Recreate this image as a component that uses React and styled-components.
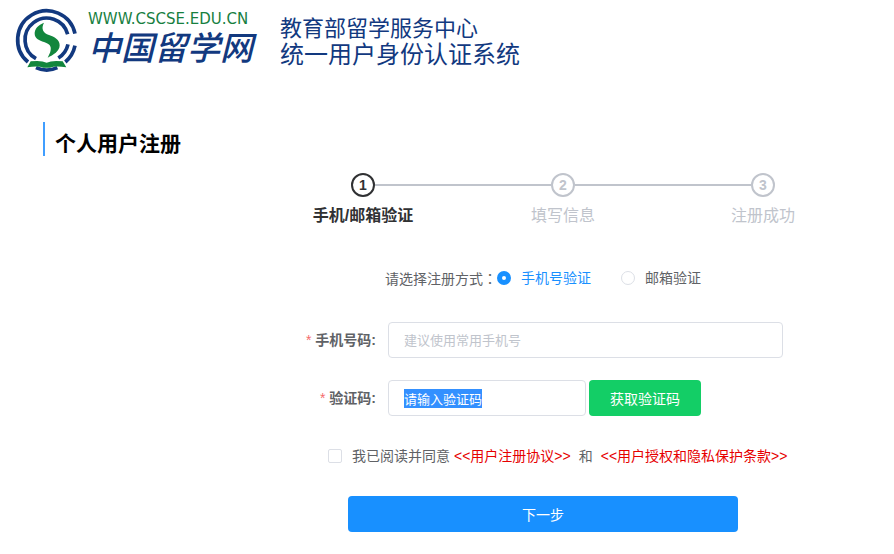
import React, { useEffect, useRef, useState } from "react";
import styled, { createGlobalStyle } from "styled-components";

const colorPalette = {
  brand: "#12397f",
  brandGreen: "#17803f",
  primary: "#1890ff",
  success: "#13ce66",
  text: "#606266",
  dark: "#303133",
  muted: "#c0c4cc",
  border: "#dcdfe6",
  danger: "#f56c6c",
  link: "#e60000",
};

const GlobalStyle = createGlobalStyle`
  * {
    box-sizing: border-box;
  }

  body {
    margin: 0;
    background-color: white;
    color: ${colorPalette.text};
    font-family: "Liberation Sans", "Noto Sans CJK SC", sans-serif;
    font-size: 14px;
    line-height: 20px;
  }

  button,
  input {
    font-family: inherit;
  }
`;

const Header = styled.header`
  display: flex;
  align-items: flex-start;
  padding: 4px 14px 0;
`;

const LogoMark = styled.svg`
  width: 66px;
  height: 70px;
  flex-shrink: 0;
`;

const LogoWords = styled.div`
  display: flex;
  flex-direction: column;
  margin: 4px 0 0 8px;
  white-space: nowrap;
`;

const LogoUrl = styled.span`
  color: ${colorPalette.brandGreen};
  font-family: "DejaVu Sans", sans-serif;
  font-size: 15px;
  line-height: 22px;
`;

const LogoName = styled.span`
  color: ${colorPalette.brand};
  font-size: 33px;
  font-style: italic;
  font-weight: 500;
  line-height: 38px;
`;

const SystemName = styled.div`
  display: flex;
  flex-direction: column;
  margin: 12px 0 0 27px;
  color: ${colorPalette.brand};
  line-height: 26px;
  white-space: nowrap;
`;

const SystemLine = styled.span`
  font-size: ${(props) => props.$size};
`;

const PageTitle = styled.h1`
  margin: 48px 0 0 43px;
  padding-left: 10px;
  border-left: 2px solid #409eff;
  color: black;
  font-size: 21px;
  font-weight: 700;
  line-height: 34px;
  padding-top: 5px;
  height: 34px;
`;

const Main = styled.main`
  padding: 17px 31px 22px 263px;
`;

const StepList = styled.ol`
  display: grid;
  grid-template-columns: repeat(3, 1fr);
  list-style-type: none;
  margin: 0;
  padding: 0;
`;

const StepItem = styled.li`
  color: ${(props) => (props.$active ? colorPalette.dark : colorPalette.muted)};
  font-size: 16px;
  font-weight: ${(props) => (props.$active ? 700 : 400)};
  line-height: 38px;
  text-align: center;
`;

const StepHead = styled.div`
  display: flex;
  align-items: center;
`;

const StepLine = styled.span`
  flex: 1;
  height: 2px;
  background-color: ${(props) => (props.$hidden ? "transparent" : colorPalette.muted)};
`;

const StepCircle = styled.span`
  width: 24px;
  height: 24px;
  border: 2px solid currentColor;
  border-radius: 50%;
  font-size: 14px;
  font-weight: 700;
  line-height: 20px;
`;

const Form = styled.form`
  display: flex;
  flex-direction: column;
  gap: 22px;
  margin-top: 32px;
`;

const MethodGroup = styled.div`
  display: flex;
  align-items: center;
  height: 22px;
  margin: 0 0 11px 122px;
  white-space: nowrap;
`;

const Colon = styled.span`
  font-family: "Noto Sans CJK TC", sans-serif;
`;

const Choice = styled.label`
  display: flex;
  align-items: center;
  gap: 10px;
  margin-right: 30px;
  color: ${(props) => (props.$checked ? colorPalette.primary : colorPalette.text)};
  cursor: pointer;
`;

const Radio = styled.input`
  appearance: none;
  width: 14px;
  height: 14px;
  margin: 0;
  border: 1px solid ${colorPalette.border};
  border-radius: 50%;
  background-color: white;

  &:checked {
    border: 5px solid ${colorPalette.primary};
  }
`;

const Field = styled.div`
  display: grid;
  grid-template-columns: 125px 1fr;
  align-items: center;
  padding-right: 80px;
`;

const FieldLabel = styled.label`
  padding-right: 12px;
  font-weight: 700;
  text-align: right;

  &::before {
    content: "*";
    margin-right: 4px;
    color: ${colorPalette.danger};
    font-weight: 400;
  }
`;

const CodeControls = styled.div`
  display: flex;
  gap: 3px;
`;

const TextInput = styled.input`
  width: 100%;
  max-width: ${(props) => props.$maxWidth || "none"};
  height: 36px;
  padding: 0 15px;
  border: 1px solid ${colorPalette.border};
  border-radius: 4px;
  outline: none;
  color: ${colorPalette.text};
  font-size: 13px;

  &::placeholder {
    color: ${colorPalette.muted};
  }

  &::selection {
    background-color: #3390ff;
    color: white;
  }
`;

const Button = styled.button`
  height: 36px;
  padding: 0 21px;
  border: none;
  border-radius: 4px;
  background-color: ${(props) => props.$color};
  color: white;
  font-size: 14px;
  white-space: nowrap;
  cursor: pointer;
`;

const Agreement = styled.div`
  display: flex;
  align-items: center;
  height: 36px;
  margin-left: 65px;
  white-space: nowrap;
`;

const AgreeLabel = styled.label`
  display: flex;
  align-items: center;
  gap: 10px;
  margin-right: 4px;
`;

const Checkbox = styled.input`
  appearance: none;
  width: 14px;
  height: 14px;
  margin: 0;
  border: 1px solid ${colorPalette.border};
  border-radius: 2px;
  background-color: white;

  &:checked {
    background-color: ${colorPalette.primary};
  }
`;

const And = styled.span`
  margin: 0 8px;
`;

const TermsLink = styled.a`
  color: ${colorPalette.link};
  text-decoration: none;
`;

const Submit = styled.div`
  display: grid;
  padding: 0 125px 0 85px;
`;

const steps = ["手机/邮箱验证", "填写信息", "注册成功"];

const methods = [
  { value: "phone", label: "手机号验证" },
  { value: "email", label: "邮箱验证" },
];

const Logo = () => (
  <LogoMark viewBox="0 0 198 210" aria-hidden="true">
    <g fill="none" stroke={colorPalette.brand} strokeWidth="11">
      <path d="M183 89A87 87 0 1 0 42 174" />
      <path d="M183 125A87 87 0 0 1 154 174" />
      <path d="M66 191Q98 206 130 191" />
      <path d="M161 91A65 65 0 1 0 66 164" />
      <path d="M162 121A65 65 0 0 1 133 162" />
    </g>
    <path
      fill="#12863d"
      d="M90 56C73 63 61 74 62 90C63 104 76 110 90 114C106 119 112 126 110 138C109 147 104 154 101 161C118 153 137 142 137 124C137 106 121 99 105 93C88 87 80 74 90 56Z"
    />
    <path
      fill="#12863d"
      d="M50 172Q82 168 98 176Q114 168 146 172L157 190Q124 184 108 191L88 191Q72 184 40 190Z"
    />
  </LogoMark>
);

const App = () => {
  const [method, setMethod] = useState("phone");
  const [code, setCode] = useState("请输入验证码");
  const codeInput = useRef(null);

  useEffect(() => {
    codeInput.current.focus();
    codeInput.current.select();
  }, []);

  return (
    <>
      <GlobalStyle />
      <Header>
        <Logo />
        <LogoWords>
          <LogoUrl>WWW.CSCSE.EDU.CN</LogoUrl>
          <LogoName>中国留学网</LogoName>
        </LogoWords>
        <SystemName>
          <SystemLine $size="22px">教育部留学服务中心</SystemLine>
          <SystemLine $size="24px">统一用户身份认证系统</SystemLine>
        </SystemName>
      </Header>

      <PageTitle>个人用户注册</PageTitle>

      <Main>
        <StepList>
          {steps.map((title, index) => (
            <StepItem key={title} $active={index === 0}>
              <StepHead>
                <StepLine $hidden={index === 0} />
                <StepCircle>{index + 1}</StepCircle>
                <StepLine $hidden={index === steps.length - 1} />
              </StepHead>
              {title}
            </StepItem>
          ))}
        </StepList>

        <Form onSubmit={(e) => e.preventDefault()}>
          <MethodGroup role="radiogroup" aria-labelledby="method-label">
            <span id="method-label">
              请选择注册方式<Colon>：</Colon>
            </span>
            {methods.map((item) => (
              <Choice key={item.value} $checked={method === item.value}>
                <Radio
                  type="radio"
                  name="method"
                  value={item.value}
                  checked={method === item.value}
                  onChange={() => setMethod(item.value)}
                />
                {item.label}
              </Choice>
            ))}
          </MethodGroup>

          <Field>
            <FieldLabel htmlFor="phone">手机号码:</FieldLabel>
            <TextInput id="phone" type="text" placeholder="建议使用常用手机号" />
          </Field>

          <Field>
            <FieldLabel htmlFor="code">验证码:</FieldLabel>
            <CodeControls>
              <TextInput
                id="code"
                type="text"
                ref={codeInput}
                $maxWidth="198px"
                value={code}
                onChange={(e) => setCode(e.target.value)}
              />
              <Button type="button" $color={colorPalette.success}>
                获取验证码
              </Button>
            </CodeControls>
          </Field>

          <Agreement>
            <AgreeLabel>
              <Checkbox type="checkbox" />
              我已阅读并同意
            </AgreeLabel>
            <TermsLink href="#terms">&lt;&lt;用户注册协议&gt;&gt;</TermsLink>
            <And>和</And>
            <TermsLink href="#privacy">&lt;&lt;用户授权和隐私保护条款&gt;&gt;</TermsLink>
          </Agreement>

          <Submit>
            <Button type="submit" $color={colorPalette.primary}>
              下一步
            </Button>
          </Submit>
        </Form>
      </Main>
    </>
  );
};

export default App;
